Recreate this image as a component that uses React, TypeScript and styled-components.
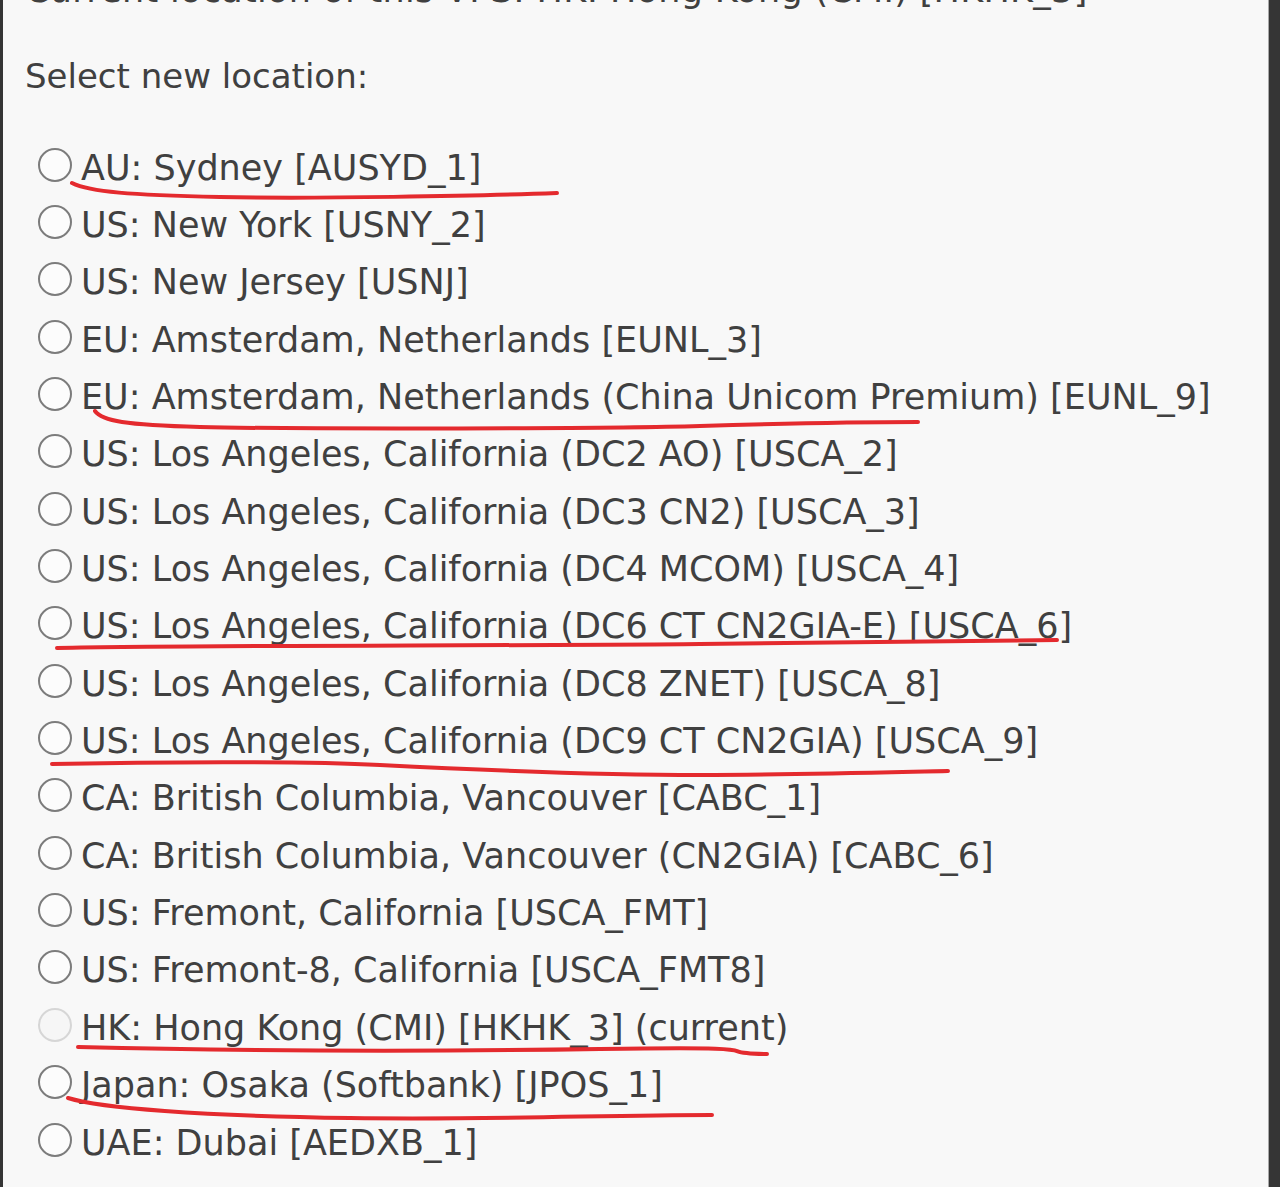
import styled, { createGlobalStyle } from "styled-components"

// locations shown in the list
const locations: { label: string; current?: boolean }[] = [
  { label: "AU: Sydney [AUSYD_1]" },
  { label: "US: New York [USNY_2]" },
  { label: "US: New Jersey [USNJ]" },
  { label: "EU: Amsterdam, Netherlands [EUNL_3]" },
  { label: "EU: Amsterdam, Netherlands (China Unicom Premium) [EUNL_9]" },
  { label: "US: Los Angeles, California (DC2 AO) [USCA_2]" },
  { label: "US: Los Angeles, California (DC3 CN2) [USCA_3]" },
  { label: "US: Los Angeles, California (DC4 MCOM) [USCA_4]" },
  { label: "US: Los Angeles, California (DC6 CT CN2GIA-E) [USCA_6]" },
  { label: "US: Los Angeles, California (DC8 ZNET) [USCA_8]" },
  { label: "US: Los Angeles, California (DC9 CT CN2GIA) [USCA_9]" },
  { label: "CA: British Columbia, Vancouver [CABC_1]" },
  { label: "CA: British Columbia, Vancouver (CN2GIA) [CABC_6]" },
  { label: "US: Fremont, California [USCA_FMT]" },
  { label: "US: Fremont-8, California [USCA_FMT8]" },
  { label: "HK: Hong Kong (CMI) [HKHK_3] (current)", current: true },
  { label: "Japan: Osaka (Softbank) [JPOS_1]" },
  { label: "UAE: Dubai [AEDXB_1]" },
]

// hand drawn red marks, in page pixels
const marks = [
  "M72 183 C 90 192, 130 195, 220 197 S 480 196, 557 193",
  "M95 411 C 102 421, 125 425, 200 427 S 600 429, 700 426 S 880 422, 918 422",
  "M57 648 C 200 645, 500 646, 700 644 S 1000 640, 1057 640",
  "M52 764 C 150 762, 300 761, 380 765 S 600 775, 700 775 S 900 772, 948 771",
  "M78 1047 C 200 1050, 400 1052, 600 1049 S 700 1053, 767 1054",
  "M68 1098 C 100 1108, 200 1116, 350 1118 S 600 1115, 712 1115",
]

function App() {
  return (
    <>
      <GlobalStyle />
      <Frame>
        <Panel>
          <CurrentLine>Current location of this VPS: HK: Hong Kong (CMI) [HKHK_3]</CurrentLine>
          <Heading>Select new location:</Heading>
          <LocationList>
            {locations.map((loc) => (
              <LocationRow key={loc.label}>
                <Radio type="radio" name="location" disabled={loc.current} />
                <span>{loc.label}</span>
              </LocationRow>
            ))}
          </LocationList>
          <Marks viewBox="0 0 1280 1187" width="1280" height="1187">
            {marks.map((d) => (
              <path key={d} d={d} />
            ))}
          </Marks>
        </Panel>
      </Frame>
    </>
  )
}

export default App

const GlobalStyle = createGlobalStyle`
  html, body {
    margin: 0;
    padding: 0;
    background: #353535;
  }
`

const Frame = styled.div`
  height: 1187px;
  overflow: hidden;
  display: flex;
  padding-left: 3px;
  padding-right: 11px;
  background: #353535;
`

const Panel = styled.div`
  position: relative;
  flex: 1;
  background: #f8f8f8;
  border-right: 1px solid #a8a8a8;
  padding-left: 22px;
  font-family: "DejaVu Sans", Verdana, sans-serif;
  font-size: 35px;
  color: #404040;
  overflow: hidden;
`

const CurrentLine = styled.p`
  margin: -30px 0 0 0;
  line-height: 40px;
  white-space: nowrap;
  letter-spacing: 0.3px;
`

const Heading = styled.p`
  margin: 46px 0 0 0;
  line-height: 40px;
  font-size: 34px;
`

const LocationList = styled.div`
  margin-top: 43px;
  display: flex;
  flex-direction: column;
`

const LocationRow = styled.label`
  display: flex;
  align-items: center;
  gap: 9px;
  height: 57.35px;
  white-space: nowrap;
`

const Radio = styled.input`
  appearance: none;
  margin: 0 0 6px 13px;
  width: 34px;
  height: 34px;
  flex: none;
  border-radius: 50%;
  border: 2px solid #7c7c7c;
  background: #fcfcfc;
  box-sizing: border-box;

  &:disabled {
    border-color: #d6d6d6;
    background: #f6f6f6;
  }
`

const Marks = styled.svg`
  position: absolute;
  left: -3px;
  top: 0;
  pointer-events: none;
  fill: none;
  stroke: #e42a2e;
  stroke-width: 4;
  stroke-linecap: round;
`
